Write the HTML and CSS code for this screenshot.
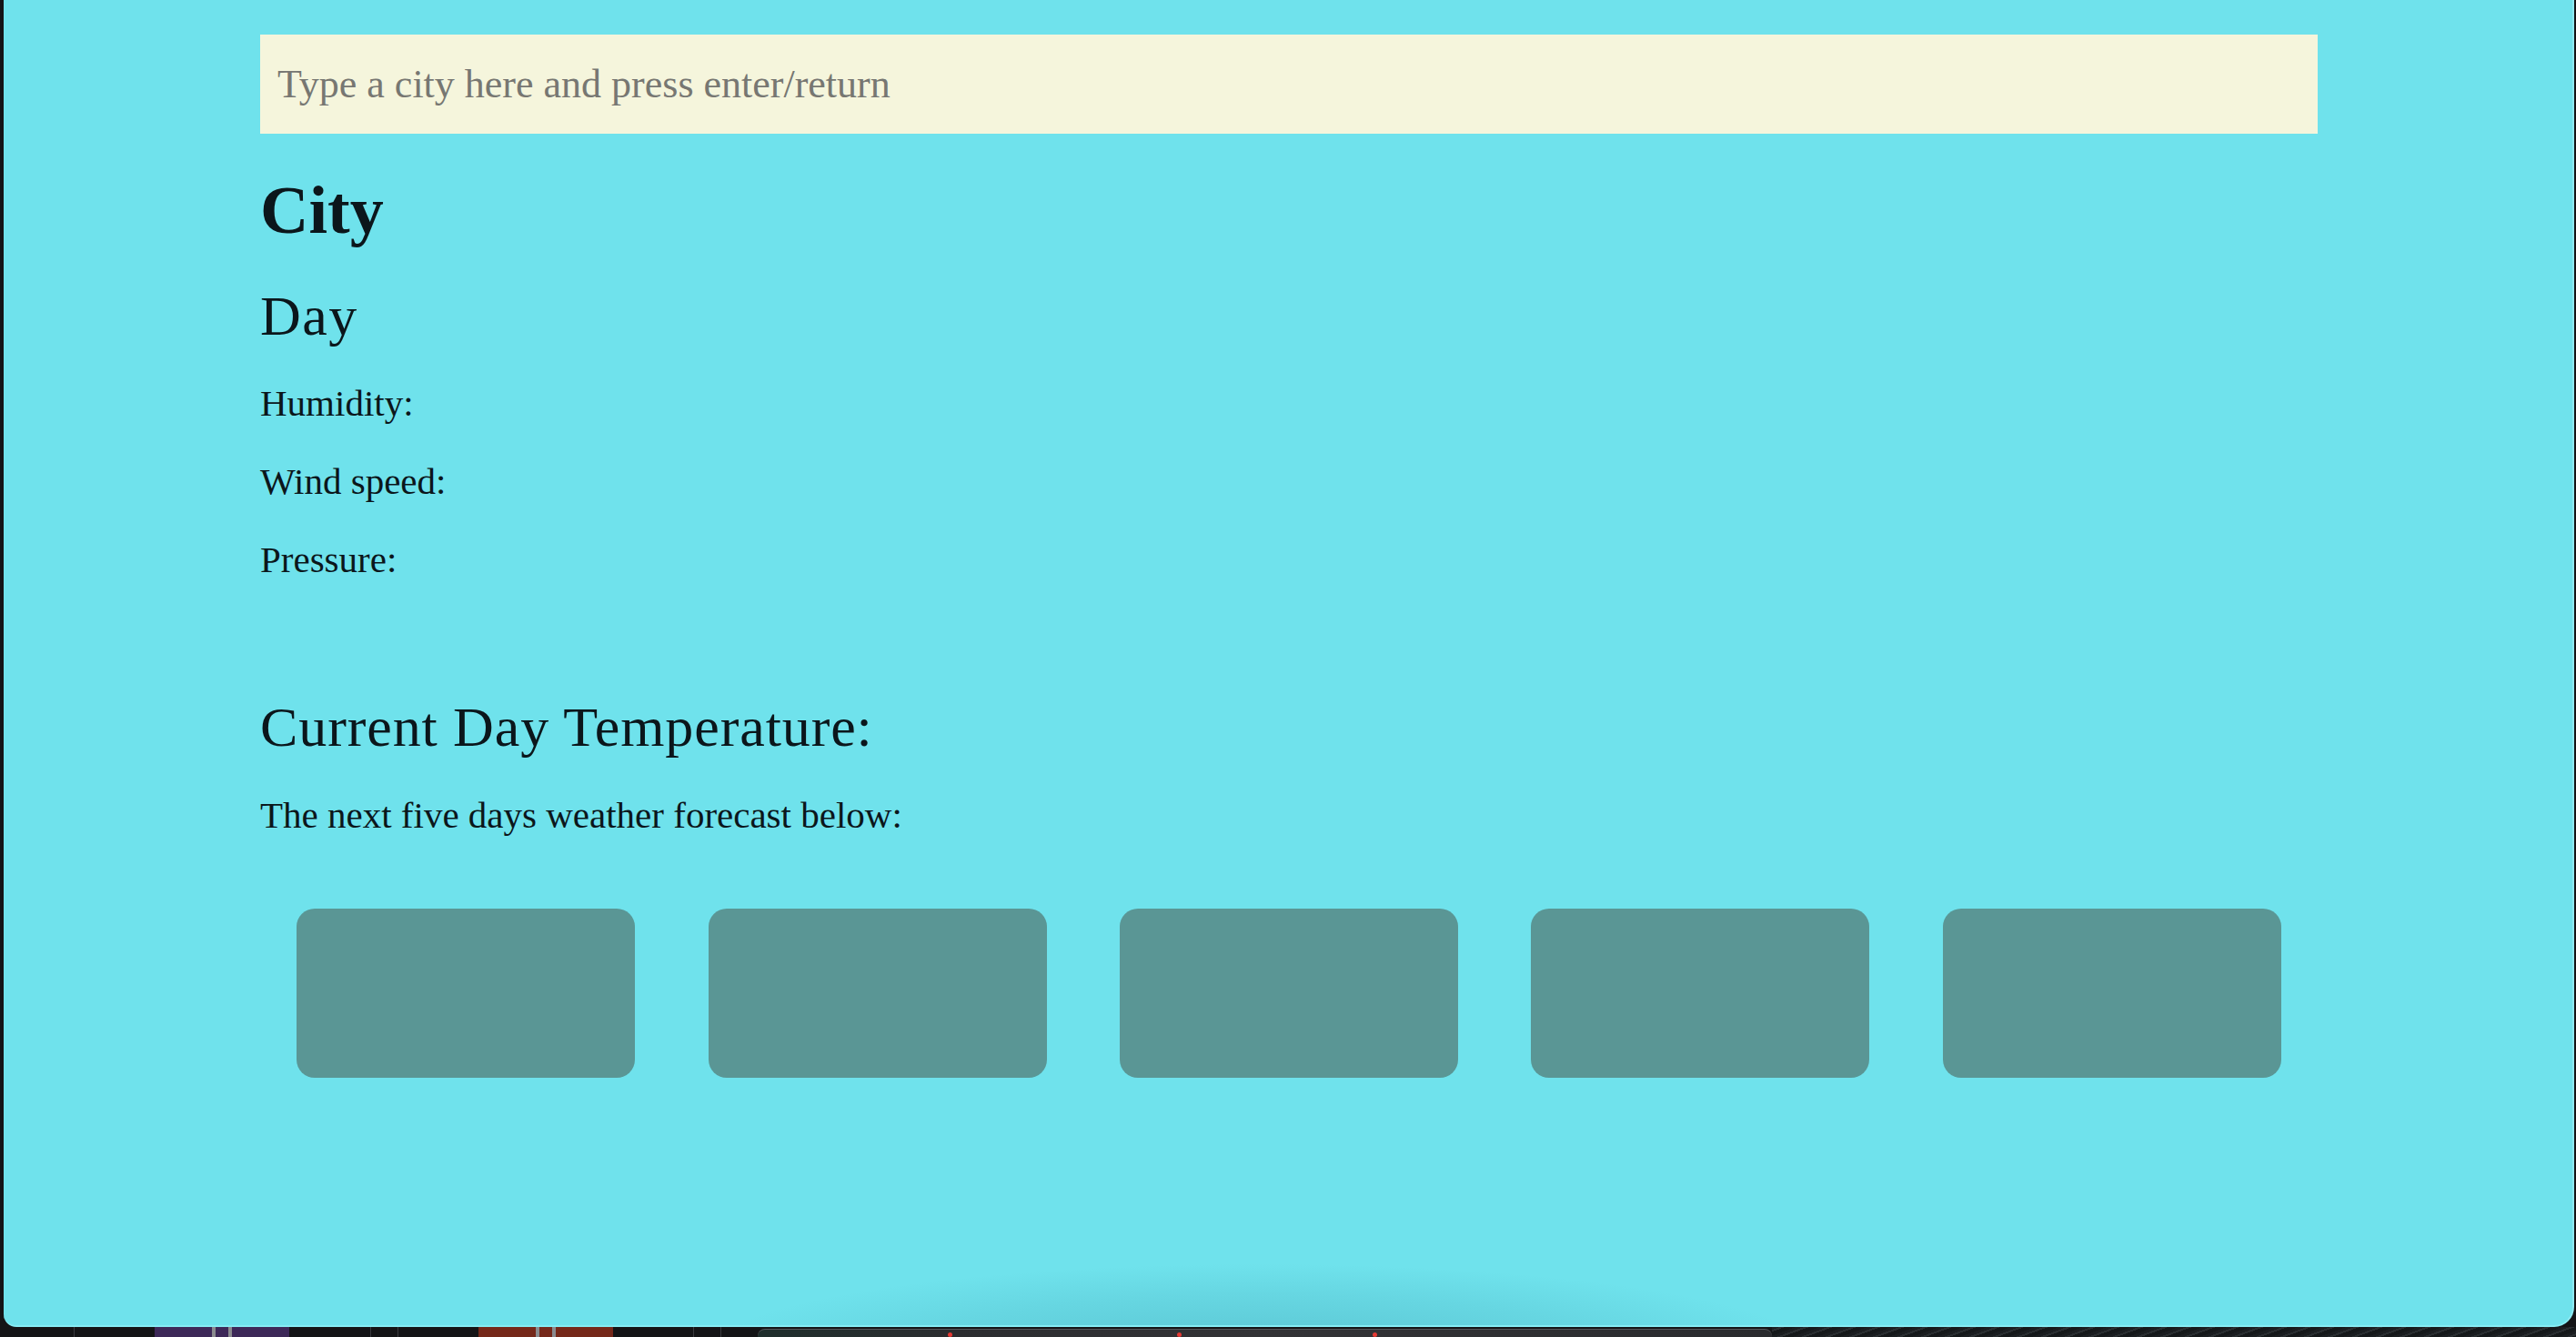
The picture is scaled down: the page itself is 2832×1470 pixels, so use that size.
FILE: index.html
```html
<!DOCTYPE html>
<html lang="en">
<head>
<meta charset="utf-8">
<title>Weather Dashboard</title>
<link rel="stylesheet" href="styles.css">
</head>
<body>
<div class="window">
  <main class="container">
    <input class="search" type="text" placeholder="Type a city here and press enter/return">
    <h1 class="city">City</h1>
    <h2 class="day">Day</h2>
    <p class="stat">Humidity:</p>
    <p class="stat">Wind speed:</p>
    <p class="stat">Pressure:</p>
    <h2 class="temp">Current Day Temperature:</h2>
    <p class="stat intro">The next five days weather forecast below:</p>
    <div class="forecast">
      <div class="card"></div>
      <div class="card"></div>
      <div class="card"></div>
      <div class="card"></div>
      <div class="card"></div>
    </div>
  </main>
  <div class="dock-shadow"></div>
</div>
<div class="dock-strip">
  <span class="sep s1"></span>
  <span class="tile purple"><i></i><i></i></span>
  <span class="sep s2"></span>
  <span class="sep s3"></span>
  <span class="tile orange"><i></i><i></i></span>
  <span class="sep s4"></span>
  <span class="sep s5"></span>
  <span class="dock"><b></b><b></b><b></b></span>
  <span class="desk"></span>
</div>
</body>
</html>
```
FILE: styles.css
```css
html, body {
  margin: 0;
  padding: 0;
}
body {
  background: #141416;
  width: 2832px;
  height: 1470px;
  overflow: hidden;
  font-family: "Liberation Serif", "DejaVu Serif", serif;
  color: #0b161b;
}
.window {
  position: relative;
  margin-left: 4px;
  width: 2824px;
  height: 1457px;
  background: #6fe2ec;
  border-right: 2px solid #8eeaf2;
  border-bottom: 2px solid #86ecf4;
  border-bottom-left-radius: 14px;
  border-bottom-right-radius: 22px;
  overflow: hidden;
}
.container {
  width: 2262px;
  margin: 0 auto;
  padding-top: 38px;
  padding-left: 2px;
  box-sizing: content-box;
}
.search {
  display: block;
  box-sizing: border-box;
  width: 2262px;
  height: 109px;
  margin: 0;
  padding: 0 19px;
  border: none;
  outline: none;
  background: #f5f5dc;
  font-family: "Liberation Serif", "DejaVu Serif", serif;
  font-size: 44px;
  color: #222;
}
.search::placeholder {
  color: #777772;
}
.city {
  margin: 47px 0 0;
  font-size: 74px;
  line-height: 1;
  font-weight: bold;
}
.day {
  margin: 48px 0 0;
  font-size: 62px;
  line-height: 1;
  font-weight: normal;
  letter-spacing: 1.5px;
}
.stat {
  margin: 45px 0 0;
  font-size: 41px;
  line-height: 1;
}
.temp {
  margin: 132px 0 0;
  font-size: 62px;
  line-height: 1;
  font-weight: normal;
  letter-spacing: 0.9px;
}
.intro {
  margin-top: 46px;
}
.forecast {
  display: flex;
  justify-content: space-around;
  margin-top: 82px;
}
.card {
  width: 372px;
  height: 186px;
  background: #5a9695;
  border-radius: 20px;
}
.dock-shadow {
  position: absolute;
  left: 772px;
  width: 1220px;
  bottom: -30px;
  height: 150px;
  background: radial-gradient(ellipse 50% 65% at 50% 100%, rgba(40, 130, 150, 0.3), rgba(40, 130, 150, 0.12) 65%, rgba(40, 130, 150, 0) 100%);
  pointer-events: none;
}
.dock-strip {
  display: flex;
  height: 11px;
  background: #141416;
  overflow: hidden;
}
.sep {
  width: 1px;
  height: 11px;
  background: #3a3a3e;
}
.s1 { margin-left: 81px; }
.tile {
  display: flex;
  justify-content: center;
  gap: 14px;
  width: 148px;
  height: 11px;
}
.tile i {
  display: block;
  width: 4px;
  height: 11px;
  background: #8a8a8e;
}
.purple { margin-left: 88px; background: #3d2858; }
.s2 { margin-left: 89px; }
.s3 { margin-left: 29px; }
.orange { margin-left: 88px; background: #75281a; }
.s4 { margin-left: 88px; }
.s5 { margin-left: 29px; }
.dock {
  position: relative;
  margin-left: 40px;
  margin-top: 2px;
  width: 1115px;
  height: 11px;
  background: linear-gradient(90deg, #1f2e2c, #2c2d30 20%, #333336 50%, #2a2b2e);
  border-top: 1px solid #55565a;
  border-radius: 8px 8px 0 0;
}
.dock b {
  position: absolute;
  top: 3px;
  width: 5px;
  height: 5px;
  border-radius: 50%;
  background: #e53a34;
}
.dock b:nth-child(1) { left: 209px; }
.dock b:nth-child(2) { left: 461px; }
.dock b:nth-child(3) { left: 676px; }
.desk {
  flex: 1;
  height: 11px;
  background: repeating-linear-gradient(160deg, #1b1e21 0 3px, #2a2e31 3px 5px, #15181a 5px 9px);
}
```
